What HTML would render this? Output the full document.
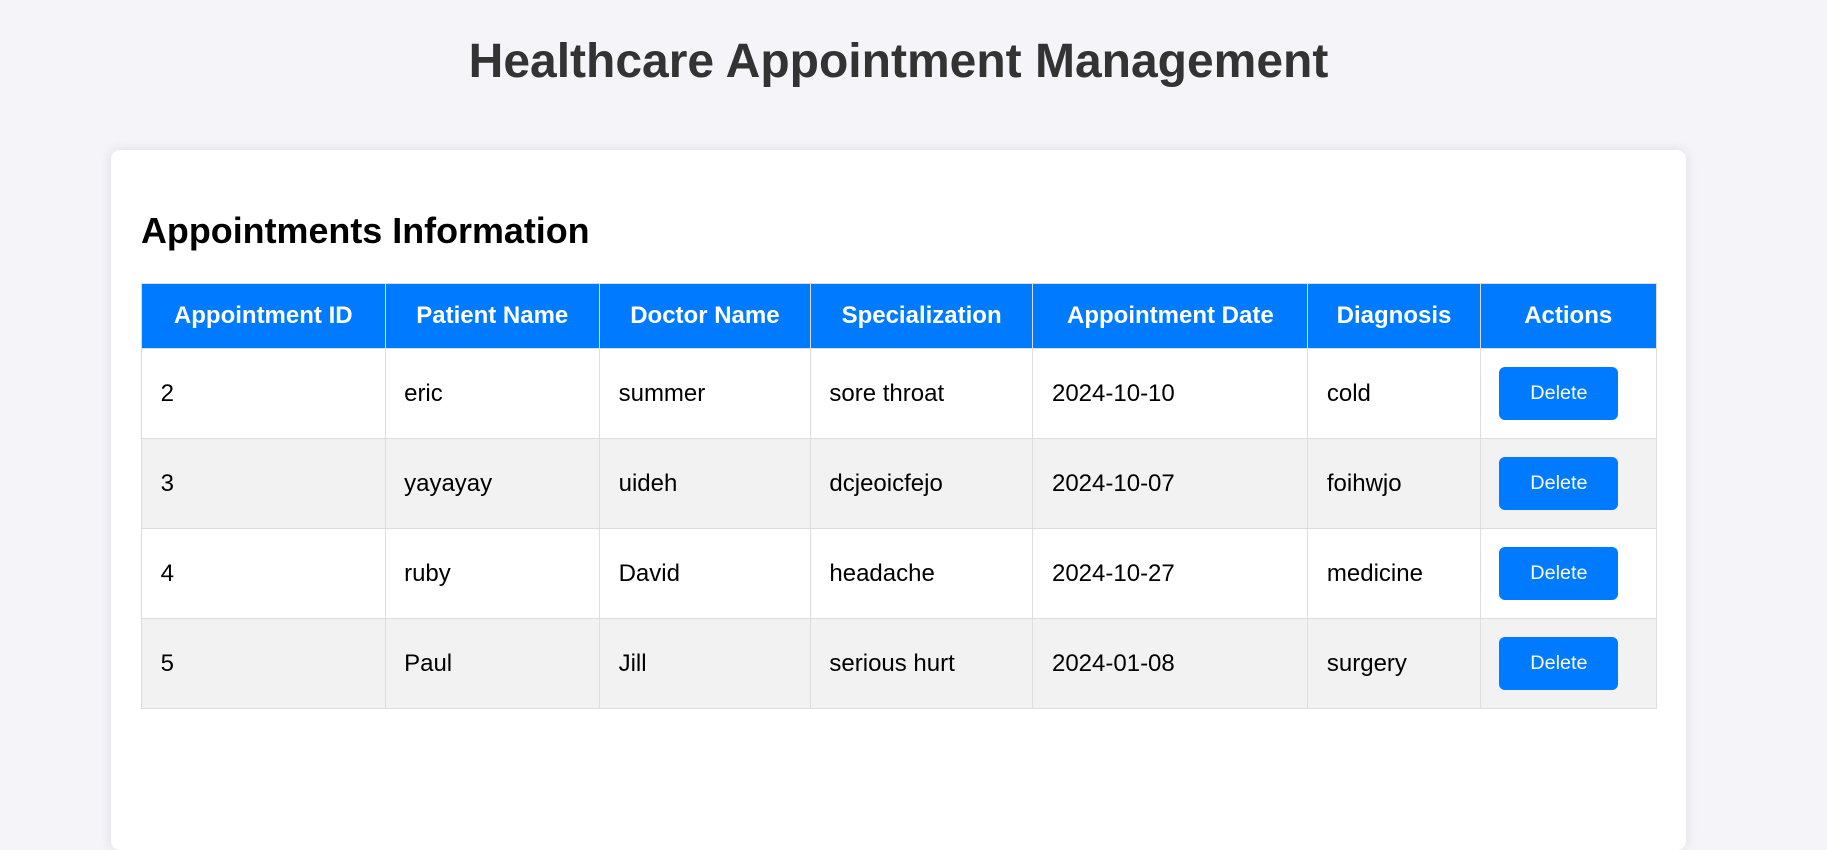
<!DOCTYPE html>
<html><head><meta charset="utf-8"><style>
html,body{margin:0;padding:0;}
body{width:1827px;height:729px;overflow:hidden;background:#f4f4f9;font-family:"Liberation Sans",Arial,sans-serif;position:relative;}
h1{position:absolute;top:35px;left:0;width:1797px;margin:0;text-align:center;font-size:48px;font-weight:bold;color:#333;line-height:53.5px;}
.card{position:absolute;left:111px;top:150px;width:1575px;height:700px;background:#fff;border-radius:9px;box-shadow:0 0 12px rgba(0,0,0,0.1);}
h2{position:absolute;left:30px;top:61px;margin:0;font-size:35.9px;line-height:41px;font-weight:bold;color:#000;}
table{position:absolute;left:30px;top:133px;width:1515px;border-collapse:collapse;table-layout:fixed;font-size:24px;}
th{background:#007bff;color:#fff;font-weight:bold;height:64px;border:1px solid #ddd;text-align:center;padding:0;}
td{height:89px;border:1px solid #ddd;padding:0 0 0 18.6px;text-align:left;color:#000;}
tr.alt td{background:#f2f2f2;}
button{width:119px;height:52.5px;background:#007bff;color:#fff;border:none;border-radius:6px;font-family:"Liberation Sans",Arial,sans-serif;font-size:19.8px;padding:0;}
</style></head><body>
<h1>Healthcare Appointment Management</h1>
<div class="card">
<h2>Appointments Information</h2>
<table>
<colgroup><col style="width:243.5px"><col style="width:214.5px"><col style="width:210.8px"><col style="width:222.6px"><col style="width:274.9px"><col style="width:172.5px"><col style="width:175.9px"></colgroup>
<tr><th>Appointment ID</th><th>Patient Name</th><th>Doctor Name</th><th>Specialization</th><th>Appointment Date</th><th>Diagnosis</th><th>Actions</th></tr>
<tr><td>2</td><td>eric</td><td>summer</td><td>sore throat</td><td>2024-10-10</td><td>cold</td><td><button>Delete</button></td></tr>
<tr class="alt"><td>3</td><td>yayayay</td><td>uideh</td><td>dcjeoicfejo</td><td>2024-10-07</td><td>foihwjo</td><td><button>Delete</button></td></tr>
<tr><td>4</td><td>ruby</td><td>David</td><td>headache</td><td>2024-10-27</td><td>medicine</td><td><button>Delete</button></td></tr>
<tr class="alt"><td>5</td><td>Paul</td><td>Jill</td><td>serious hurt</td><td>2024-01-08</td><td>surgery</td><td><button>Delete</button></td></tr>
</table>
</div>
</body></html>
